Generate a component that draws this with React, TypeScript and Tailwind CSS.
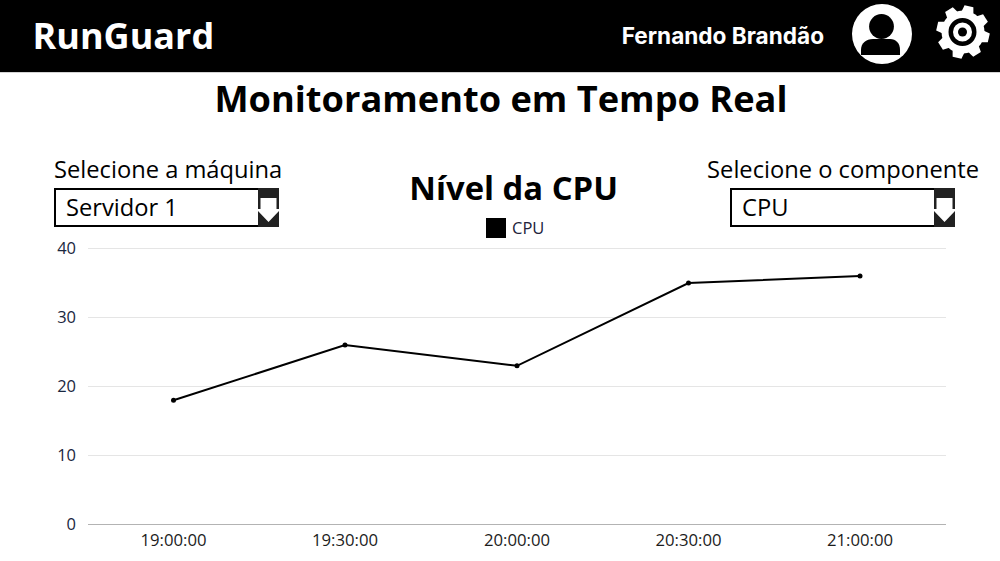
const xs = [173.5, 345, 517, 688.5, 860];
const vals = [18, 26, 23, 35, 36];
const labels = ["19:00:00", "19:30:00", "20:00:00", "20:30:00", "21:00:00"];
const yOf = (v: number) => 524.5 - v * 6.9;
const OFFSET = 236;

function Select({ value }: { value: string }) {
  return (
    <div className="flex h-[39px] w-[225px] border-2 border-black bg-white">
      <div className="flex-1 pl-[10px] text-[23.7px] leading-[34px] text-black">{value}</div>
      <div className="-my-[2px] -mr-[2px] h-[39px] w-[21px] shrink-0 bg-[#212121]">
        <svg width="21" height="39" viewBox="0 0 21 39" className="block">
          <path d="M2.5 10H18.5V21H21V23L10.5 34L0 23V21H2.5Z" fill="#fff" />
        </svg>
      </div>
    </div>
  );
}

function Chart() {
  return (
    <svg width="1000" height="325" viewBox={`0 ${OFFSET} 1000 325`} className="relative block">
      {[40, 30, 20, 10].map((v) => (
        <line key={v} x1="88" x2="946" y1={yOf(v)} y2={yOf(v)} stroke="#e5e5e5" strokeWidth="1" />
      ))}
      <line x1="88" x2="946" y1="524.5" y2="524.5" stroke="#b3b3b3" strokeWidth="1" />
      {[0, 10, 20, 30, 40].map((v) => (
        <text key={v} x="76" y={yOf(v) + 5.5} textAnchor="end" fontSize="16.5" fill="#1a2740">
          {v}
        </text>
      ))}
      {labels.map((l, i) => (
        <text key={l} x={xs[i]} y="545.5" textAnchor="middle" fontSize="16.7" fill="#1c1c1c">
          {l}
        </text>
      ))}
      <polyline
        points={xs.map((x, i) => `${x},${yOf(vals[i])}`).join(" ")}
        fill="none"
        stroke="#000"
        strokeWidth="2"
      />
      {xs.map((x, i) => (
        <circle key={x} cx={x} cy={yOf(vals[i])} r="2.5" fill="#000" />
      ))}
    </svg>
  );
}

export default function App() {
  return (
    <div className="h-[561px] w-[1000px] overflow-hidden bg-white font-['Open_Sans',sans-serif] text-black">
      <header className="flex h-[73px] items-center border-b border-[#d4d4d4] bg-black pl-[32.5px] pr-[9px] text-white">
        <div className="text-[36px] font-bold leading-none">RunGuard</div>
        <div className="ml-auto font-['Inter',sans-serif] text-[22.6px] font-bold">Fernando Brandão</div>
        <svg width="60" height="60" viewBox="0 0 60 60" className="ml-[28px] mt-[-5px]">
          <circle cx="30" cy="30" r="30" fill="#fff" />
          <circle cx="29.5" cy="22.5" r="12.4" fill="#000" />
          <path d="M9 51V46C9 39 14 35 21 35H38C44 35 48 39 48 46V51Z" fill="#000" />
        </svg>
        <svg width="56" height="56" viewBox="0 0 56 56" className="ml-[23px] mt-[-9px]">
          <circle cx="28" cy="28" r="21.5" fill="#fff" />
          <g fill="#fff">
            {[13, 58, 103, 148, 193, 238, 283, 328].map((a) => (
              <path key={a} d="M22 8L23.5 1.5H32.5L34 8Z" transform={`rotate(${a} 28 28)`} />
            ))}
          </g>
          <circle cx="27.5" cy="28" r="11.75" fill="none" stroke="#000" strokeWidth="4.5" />
          <circle cx="27.5" cy="28" r="4.5" fill="#000" />
        </svg>
      </header>
      <h1 className="h-[54px] pl-[2px] text-center text-[36.2px] font-bold leading-[50px]">Monitoramento em Tempo Real</h1>
      <div className="flex h-[109px] justify-between pl-[54px] pr-[21px] pt-[25px]">
        <div className="flex flex-col">
          <div className="mb-[1px] text-[23.7px] leading-[35px]">Selecione a máquina</div>
          <Select value="Servidor 1" />
        </div>
        <div className="ml-[38px] flex flex-col items-center pt-[16px]">
          <div className="text-[32.8px] font-bold leading-[40px]">Nível da CPU</div>
          <div className="relative z-10 ml-[3px] mt-[10px] flex items-center gap-[6px]">
            <div className="h-[20px] w-[20px] bg-black" />
            <div className="text-[16.5px] leading-[20px] text-[#22223a]">CPU</div>
          </div>
        </div>
        <div className="flex flex-col items-center">
          <div className="mb-[1px] text-[23.7px] leading-[35px]">Selecione o componente</div>
          <div className="mr-[1px]">
            <Select value="CPU" />
          </div>
        </div>
      </div>
      <Chart />
    </div>
  );
}
